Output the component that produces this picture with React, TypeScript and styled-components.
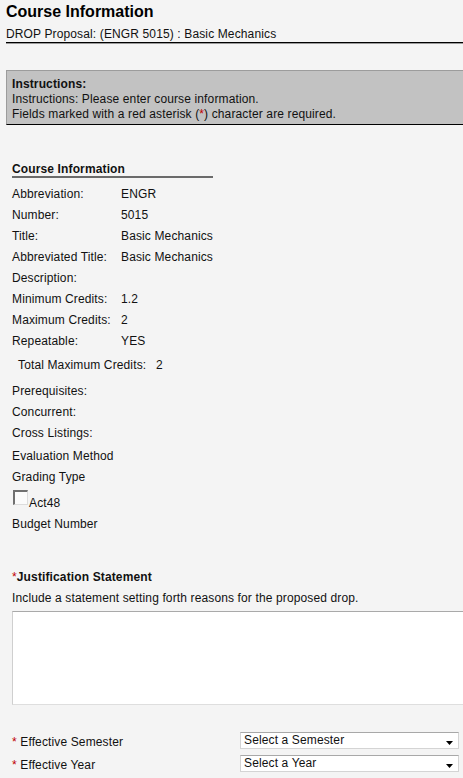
import React from "react";
import styled, { createGlobalStyle } from "styled-components";

const GlobalStyle = createGlobalStyle`
  html, body {
    margin: 0;
    padding: 0;
    background: #f4f4f4;
    overflow: hidden;
  }
  body {
    font-family: "Liberation Sans", Arial, sans-serif;
    font-size: 12px;
    letter-spacing: 0.13px;
    color: #111;
  }
`;

const Page = styled.div`
  padding: 3px 0 0 6px;
`;

const Header = styled.header`
  padding-bottom: 1px;
  border-bottom: 1px solid #000;
  box-shadow: 0 1px 0 #9a9a9a;
`;

const Title = styled.h1`
  margin: 0;
  font-size: 16px;
  line-height: 18px;
  font-weight: bold;
  letter-spacing: 0;
  color: #000;
`;

const Subtitle = styled.div`
  margin-top: 6px;
  line-height: 14px;
`;

const Instructions = styled.div`
  margin-top: 27px;
  padding: 6px 5px 2px;
  background: #c2c2c2;
  border-top: 1px solid #9c9c9c;
  border-left: 1px solid #9c9c9c;
  border-bottom: 1px solid #000;
  line-height: 15px;
`;

const Strong = styled.div`
  font-weight: bold;
`;

const Red = styled.span`
  color: #c00000;
`;

const Section = styled.section`
  padding-left: 6px;
`;

const SectionHeading = styled.div`
  margin-top: 37px;
  margin-bottom: 6px;
  width: 201px;
  font-weight: bold;
  line-height: 14px;
  border-bottom: 2px solid #6a6a6a;
`;

const Row = styled.div<{ $gap?: number; $indent?: number; $label?: number }>`
  display: grid;
  grid-template-columns: ${(p) => p.$label ?? 109}px auto;
  margin-top: ${(p) => p.$gap ?? 0}px;
  padding-left: ${(p) => p.$indent ?? 0}px;
  line-height: 21px;
  white-space: nowrap;
`;

const CheckRow = styled.label`
  display: flex;
  align-items: flex-start;
  height: 26px;
  padding-top: 2px;
  box-sizing: border-box;
`;

const Box = styled.span`
  display: block;
  width: 15px;
  height: 15px;
  margin-left: 1px;
  box-sizing: border-box;
  background: #fbfbfb;
  border-top: 2px solid #707070;
  border-left: 2px solid #707070;
  border-right: 1px solid #dcdcdc;
  border-bottom: 1px solid #dcdcdc;
`;

const CheckLabel = styled.span`
  margin: 6px 0 0 1px;
  line-height: 14px;
`;

const FieldTitle = styled.div`
  margin-top: 35px;
  font-weight: bold;
  line-height: 14px;
`;

const Asterisk = styled.span`
  color: #c00000;
  font-weight: normal;
`;

const Hint = styled.div`
  margin-top: 7px;
  line-height: 14px;
`;

const TextArea = styled.textarea`
  display: block;
  margin-top: 6px;
  width: 470px;
  height: 94px;
  box-sizing: border-box;
  background: #fff;
  border: 1px solid #dedede;
  border-top-color: #a9a9a9;
  border-left-color: #cfcfcf;
  resize: none;
  outline: none;
  font-family: inherit;
`;

const SelectRow = styled.div<{ $gap: number }>`
  display: grid;
  grid-template-columns: 228px 219px;
  margin-top: ${(p) => p.$gap}px;
  height: 17px;
`;

const SelectLabel = styled.div`
  padding-top: 3px;
  line-height: 14px;
`;

const SelectWrap = styled.div`
  position: relative;
  height: 17px;
`;

const Select = styled.select`
  appearance: none;
  width: 100%;
  height: 17px;
  margin: 0;
  padding: 0 0 0 3px;
  box-sizing: border-box;
  background: #fff;
  border: 1px solid #d4d4d4;
  border-top-color: #a8a8a8;
  border-radius: 0;
  font-family: inherit;
  font-size: 12px;
  letter-spacing: 0.13px;
  line-height: 15px;
  color: #111;
  outline: none;
`;

const Arrow = styled.svg`
  position: absolute;
  right: 6px;
  top: 9px;
  pointer-events: none;
`;

const details: [string, string][] = [
  ["Abbreviation:", "ENGR"],
  ["Number:", "5015"],
  ["Title:", "Basic Mechanics"],
  ["Abbreviated Title:", "Basic Mechanics"],
  ["Description:", ""],
  ["Minimum Credits:", "1.2"],
  ["Maximum Credits:", "2"],
  ["Repeatable:", "YES"],
];

const Dropdown = ({ placeholder }: { placeholder: string }) => (
  <SelectWrap>
    <Select defaultValue="">
      <option value="">{placeholder}</option>
    </Select>
    <Arrow width="7" height="4" viewBox="0 0 7 4">
      <path d="M0 0h7L3.5 4z" fill="#000" />
    </Arrow>
  </SelectWrap>
);

const App = () => {
  return (
    <>
      <GlobalStyle />
      <Page>
        <Header>
          <Title>Course Information</Title>
          <Subtitle>DROP Proposal: (ENGR 5015) : Basic Mechanics</Subtitle>
        </Header>

        <Instructions>
          <Strong>Instructions:</Strong>
          <div>Instructions: Please enter course information.</div>
          <div>
            Fields marked with a red asterisk (<Red>*</Red>) character are required.
          </div>
        </Instructions>

        <Section>
          <SectionHeading>Course Information</SectionHeading>
          {details.map(([label, value]) => (
            <Row key={label}>
              <span>{label}</span>
              <span>{value}</span>
            </Row>
          ))}
          <Row $gap={3} $indent={6} $label={138}>
            <span>Total Maximum Credits:</span>
            <span>2</span>
          </Row>
          <Row $gap={5}>Prerequisites:</Row>
          <Row>Concurrent:</Row>
          <Row>Cross Listings:</Row>
          <Row $gap={2}>Evaluation Method</Row>
          <Row>Grading Type</Row>
          <CheckRow>
            <Box />
            <CheckLabel>Act48</CheckLabel>
          </CheckRow>
          <Row>Budget Number</Row>

          <FieldTitle>
            <Asterisk>*</Asterisk>Justification Statement
          </FieldTitle>
          <Hint>Include a statement setting forth reasons for the proposed drop.</Hint>
          <TextArea />

          <SelectRow $gap={27}>
            <SelectLabel>
              <Asterisk>*</Asterisk> Effective Semester
            </SelectLabel>
            <Dropdown placeholder="Select a Semester" />
          </SelectRow>
          <SelectRow $gap={6}>
            <SelectLabel>
              <Asterisk>*</Asterisk> Effective Year
            </SelectLabel>
            <Dropdown placeholder="Select a Year" />
          </SelectRow>
        </Section>
      </Page>
    </>
  );
};

export default App;
